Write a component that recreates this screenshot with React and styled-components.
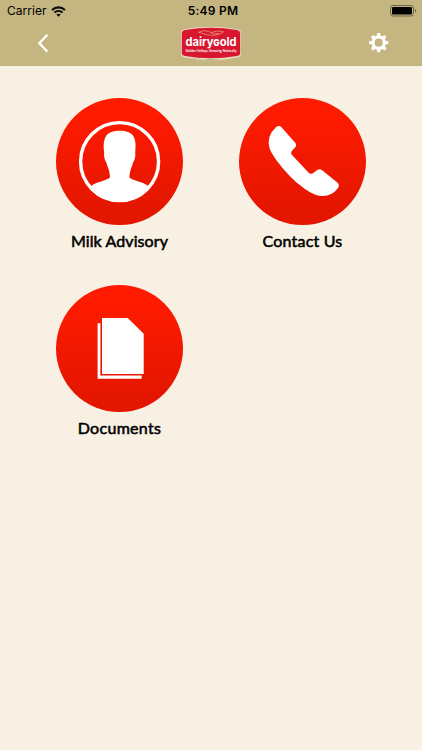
import React from "react";
import styled, { createGlobalStyle } from "styled-components";

const GlobalStyle = createGlobalStyle`
    body {
        margin: 0;
        background-color: #f8f0e3;
    }
`
const Screen = styled.div`
    width: 100%;
    min-height: 750px;
    background-color: #f8f0e3;
    color: #000;
`
const Header = styled.header`
    height: 66px;
    background-color: #c5b581;
`
const StatusBar = styled.div`
    height: 22px;
    padding: 0 5px 0 7px;
    display: grid;
    grid-template-columns: 1fr auto 1fr;
    align-items: center;
    font-family: Inter, "Liberation Sans", sans-serif;
    font-size: 12px;
    line-height: 22px;
`
const Carrier = styled.div`
    display: flex;
    align-items: center;
    gap: 4px;
    letter-spacing: 0.05px;
`
const Time = styled.div`
    padding-left: 2px;
    font-weight: 600;
    letter-spacing: 0.25px;
`
const Battery = styled.div`
    display: flex;
    justify-content: flex-end;
`
const NavBar = styled.div`
    height: 42px;
    padding: 0 31px;
    display: flex;
    justify-content: space-between;
    align-items: center;
`
const NavButton = styled.button`
    width: 24px;
    height: 24px;
    padding: 0;
    border: none;
    background: transparent;
    display: flex;
    justify-content: center;
    align-items: center;
    cursor: pointer;
`
const LogoSvg = styled.svg`
    overflow: visible;
`
const Menu = styled.main`
    padding: 32px 28px 0;
    display: grid;
    grid-template-columns: 183px 183px;
    row-gap: 32px;
`
const Tile = styled.div`
    height: 155px;
    display: flex;
    flex-direction: column;
    align-items: center;
`
const Circle = styled.div`
    width: 127px;
    height: 127px;
    border-radius: 50%;
    background: linear-gradient(#ff1b00 10%, #e31600 90%);
`
const Label = styled.div`
    margin-top: 6px;
    font-family: Lato, "Liberation Sans", sans-serif;
    font-size: 16px;
    font-weight: 400;
    line-height: 20px;
    letter-spacing: ${(props) => props.$spacing || 0}px;
    -webkit-text-stroke: 0.55px #000;
    white-space: nowrap;
`

const WifiIcon = () => (
    <svg width="15" height="11" viewBox="0 0 15 11" fill="none" stroke="#0a0a0a" strokeWidth="2.1">
        <path d="M1 4.1C4.8 .5 10.2 .5 14 4.1" />
        <path d="M3.4 6.6C5.8 4.4 9.2 4.4 11.6 6.6" />
        <path d="M7.5 10.7L5.3 8.5C6.6 7.4 8.4 7.4 9.7 8.5Z" fill="#0a0a0a" stroke="none" />
    </svg>
)

const BatteryIcon = () => (
    <svg width="27" height="12" viewBox="0 0 27 12">
        <rect x=".5" y=".5" width="23" height="10.5" rx="2.6" fill="none" stroke="#6d6448" />
        <rect x="2" y="2" width="20" height="7.5" rx="1.2" fill="#000" />
        <path d="M25 4V7.6Q26.3 7 26.3 5.8T25 4Z" fill="#6d6448" />
    </svg>
)

const BackIcon = () => (
    <svg width="24" height="24" viewBox="0 0 24 24" fill="none" stroke="#fff" strokeWidth="2.4" strokeLinecap="round">
        <path d="M15.7 4.5L8.4 12.3L15.7 20" />
    </svg>
)

const teeth = [0, 45, 90, 135, 180, 225, 270, 315]

const GearIcon = () => (
    <svg width="24" height="24" viewBox="0 0 24 24">
        <circle cx="11.7" cy="11.7" r="5.6" fill="none" stroke="#fff" strokeWidth="3" />
        {teeth.map((angle) => (
            <path key={angle} d="M9.6 5.7L10.3 2.1H13.1L13.8 5.7Z" fill="#fff" transform={`rotate(${angle} 11.7 11.7)`} />
        ))}
    </svg>
)

const Logo = () => (
    <LogoSvg width="62" height="35" viewBox="0 0 62 35">
        <path d="M1 6.5Q1.3 3.8 4.5 3.2Q31 -1.5 57.5 3.2Q60.7 3.8 61 6.5V28.7Q60.7 30.8 57.5 31.6Q31 37 4.5 31.6Q1.3 30.8 1 28.7Z" fill="#eadbc2" />
        <path d="M1.8 7Q2 4.6 5 4Q31 -.6 57 4Q60 4.6 60.2 7V27.5Q60 29.5 57 30.1Q31 34.5 5 30.1Q2 29.5 1.8 27.5Z" fill="#d9162f" />
        <path d="M10 31.8Q22 34.2 42 32.7Q29 35.4 10 31.8Z" fill="#568050" />
        <path d="M18.5 6.2Q26 3.2 31 6.6Q38 3.6 43.5 5.8Q36 12.8 18.5 6.2ZM31 6.6Q34 9 39 7.4" fill="none" stroke="#e59a70" strokeWidth=".8" />
        <text x="5.5" y="19.8" textLength="51" lengthAdjust="spacingAndGlyphs" fill="#fff" fontFamily="Inter, sans-serif" fontSize="11.6" fontWeight="700">dairy<tspan fontVariant="small-caps">g</tspan>old</text>
        <text x="5.5" y="26.3" textLength="51" lengthAdjust="spacingAndGlyphs" fill="#fff" fontFamily="Lato, sans-serif" fontSize="4" fontWeight="700">Golden Valleys, Growing Naturally</text>
    </LogoSvg>
)

const PersonIcon = () => (
    <svg width="127" height="127" viewBox="0 0 127 127">
        <circle cx="63.6" cy="63.6" r="39" fill="none" stroke="#fff" strokeWidth="3.4" />
        <path d="M35 88.2C41 83.5 49.5 83 53.9 79.8C54 76.5 53.4 73.5 52.4 70.5C51.4 68.5 50.8 66.5 50.4 64.5C48.6 62 47.6 58 48.2 54.5C46.3 39 50.5 32.7 63.7 32.7S81.1 39 79.2 54.5C79.8 58 78.8 62 77 64.5C76.6 66.5 76 68.5 75 70.5C74 73.5 73.4 76.5 73.5 79.8C77.9 83 86.4 83.5 92.4 88.2C78 108.8 49.4 108.8 35 88.2Z" fill="#fff" />
    </svg>
)

const PhoneIcon = () => (
    <svg width="127" height="127" viewBox="0 0 127 127">
        <path d="M37.5 28.7Q40.3 27.2 42.7 29.5L56.2 44.8Q58.2 47.5 56 49.5L52.8 53Q51.3 55 52.8 56.8L69.2 74.3Q71.5 77 74.2 75L78.7 71.8Q81 70.6 83.5 72.6L98.3 84.4Q101.2 87 98.8 90.3Q91.8 99.5 80.5 97.8Q72 96.5 59.5 86C48 76.5 34 59.5 30.6 50.5Q27 38 37.5 28.7Z" fill="#fff" />
    </svg>
)

const DocumentsIcon = () => (
    <svg width="127" height="127" viewBox="0 0 127 127" fill="#fff">
        <path d="M46 33H71.8L87.7 48.7V89H46Z" />
        <path d="M41.6 38.3H44.4V90.6H85.7V93.7H41.6Z" />
    </svg>
)

const items = [
    { label: "Milk Advisory", icon: <PersonIcon />, spacing: 0.1 },
    { label: "Contact Us", icon: <PhoneIcon />, spacing: 0.2 },
    { label: "Documents", icon: <DocumentsIcon />, spacing: 0.3 },
]

const App = () => {
    return (
        <Screen>
            <GlobalStyle />
            <Header>
                <StatusBar>
                    <Carrier>Carrier <WifiIcon /></Carrier>
                    <Time>5:49 PM</Time>
                    <Battery><BatteryIcon /></Battery>
                </StatusBar>
                <NavBar>
                    <NavButton aria-label="Back"><BackIcon /></NavButton>
                    <Logo />
                    <NavButton aria-label="Settings"><GearIcon /></NavButton>
                </NavBar>
            </Header>
            <Menu>
                {items.map((item) => (
                    <Tile key={item.label}>
                        <Circle>{item.icon}</Circle>
                        <Label $spacing={item.spacing}>{item.label}</Label>
                    </Tile>
                ))}
            </Menu>
        </Screen>
    )
}

export default App;
